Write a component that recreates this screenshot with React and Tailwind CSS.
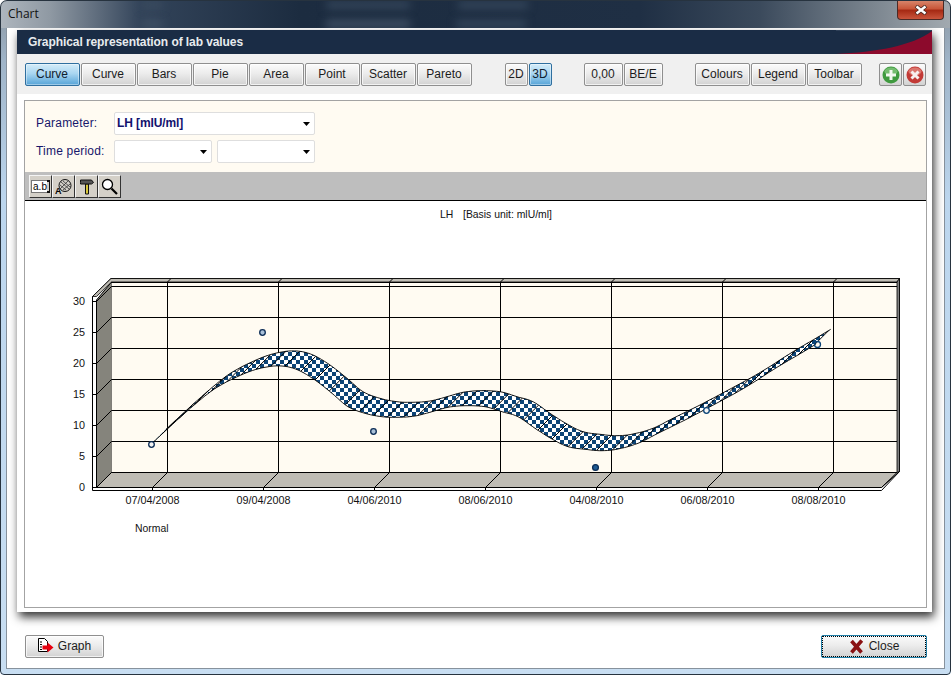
const CHART_BTNS = ["Curve", "Curve", "Bars", "Pie", "Area", "Point", "Scatter", "Pareto"];

const BTN = "h-[23px] flex items-center justify-center pb-[2px] pr-[1px] text-[12px] text-[#1c1c1c] rounded-[2px] border border-[#8f8f8f] bg-[linear-gradient(180deg,#fbfbfb_0%,#ececec_45%,#d2d2d2_100%)] shadow-[inset_0_0_0_1px_rgba(255,255,255,0.7)]";
const BTN_ON = "h-[23px] flex items-center justify-center pb-[2px] pr-[1px] text-[12px] text-[#10202e] rounded-[2px] border border-[#2f6f9f] bg-[linear-gradient(180deg,#d4ecf9_0%,#a9d6f1_45%,#56a4d8_100%)] shadow-[inset_0_0_0_1px_rgba(255,255,255,0.4)]";
const TOOL = "w-[23px] h-[23px] flex items-center justify-center bg-[#d4d0c8] border border-[#f4f4f4] border-r-[#333333] border-b-[#333333]";
const SELECT = "h-[23px] flex items-center justify-between bg-white border border-[#dedede] rounded-[2px] pl-[2px] pr-[3px]";

// back edge of the ribbon, the front edge is the same line moved by the 3D depth
const BACK = [
  [166, 429.3], [190, 407], [213, 386.7], [233, 371.7], [260, 358.3], [280, 352.3], [297, 351], [313, 355],
  [330, 365], [347, 378.3], [363, 391.7], [380, 398.3], [397, 401.7], [413, 402.3], [430, 401], [447, 396.7],
  [463, 392.3], [480, 390.7], [500, 391.7], [517, 396.7], [533, 401.7], [550, 413.3], [567, 424], [583, 431.7],
  [600, 434.3], [617, 435.7], [633, 434], [653, 428.3], [673, 418.3], [700, 405], [727, 390.7], [750, 378.3],
  [767, 368.3], [793, 351.7], [813, 340], [830.7, 329.3],
];
const DEPTH = 15;

const sampleCurve = (pts) => {
  const out = [];
  for (let i = 0; i < pts.length - 1; i++) {
    const p0 = pts[Math.max(i - 1, 0)];
    const p1 = pts[i];
    const p2 = pts[i + 1];
    const p3 = pts[Math.min(i + 2, pts.length - 1)];
    for (let s = 0; s < 6; s++) {
      const t = s / 6;
      const f = (a, b, c, d) =>
        0.5 * (2 * b + (c - a) * t + (2 * a - 5 * b + 4 * c - d) * t * t + (3 * b - a - 3 * c + d) * t * t * t);
      out.push([f(p0[0], p1[0], p2[0], p3[0]), f(p0[1], p1[1], p2[1], p3[1])]);
    }
  }
  out.push(pts[pts.length - 1]);
  return out;
};

const back = sampleCurve(BACK);
const front = back.map(([x, y]) => [x - DEPTH, y + DEPTH]);
const toPath = (pts) => pts.map(([x, y], i) => `${i ? "L" : "M"}${x.toFixed(1)} ${y.toFixed(1)}`).join(" ");
const ribbon = `${toPath(back)} ${[...front].reverse().map(([x, y]) => `L${x.toFixed(1)} ${y.toFixed(1)}`).join(" ")} Z`;

const slants = [];
let lastX = 160;
back.forEach(([x, y]) => {
  if (x - lastX >= 13.5) {
    slants.push([x, y]);
    lastX = x;
  }
});

const GRID_Y = [286, 317, 348, 379, 410, 441, 472];
const GRID_X = [167.5, 278.5, 389.5, 500.5, 611.5, 722.5, 833.5];
const Y_LABELS = ["30", "25", "20", "15", "10", "5", "0"];
const X_LABELS = ["07/04/2008", "09/04/2008", "04/06/2010", "08/06/2010", "04/08/2010", "06/08/2010", "08/08/2010"];

const LabChart = () => (
  <svg viewBox="25 201 901 406" width="901" height="406" className="block">
    <defs>
      <pattern id="checker" width="8" height="8" patternUnits="userSpaceOnUse">
        <rect width="8" height="8" fill="#ffffff" />
        <rect width="4" height="4" fill="#0c4476" />
        <rect x="4" y="4" width="4" height="4" fill="#0c4476" />
      </pattern>
    </defs>

    <text x="440" y="218" fontSize="10.4" fill="#111111">LH</text>
    <text x="463" y="218" fontSize="10.4" fill="#111111">[Basis unit: mlU/ml]</text>

    {/* box: left wall, top, back, right, floor */}
    <polygon points="92.5,296.5 111,278.5 899.5,278.5 899.5,471.5 881.5,490.5 92.5,490.5" fill="#ffffff" stroke="#000000" />
    <polygon points="96.5,300 111.5,282 111.5,472.5 96.5,487.5" fill="#85847c" stroke="#000000" />
    <polygon points="92.5,296.5 111,278.5 899.5,278.5 897,282 111.5,282 96.5,296.5" fill="#c0bdb5" stroke="#000000" strokeWidth="0.8" />
    <rect x="111.5" y="282.5" width="785.5" height="190" fill="#fffbf2" />
    <polygon points="897,282 899.5,278.5 899.5,471.5 897,472.5" fill="#808080" stroke="#000000" strokeWidth="0.8" />
    <polygon points="111.5,472.5 897,472.5 881.5,487.5 96.5,487.5" fill="#bfbcb4" stroke="#000000" />
    <line x1="111" y1="282.5" x2="897" y2="282.5" stroke="#000000" />
    <line x1="881.5" y1="487.5" x2="899.5" y2="471.5" stroke="#000000" />

    {GRID_Y.map((y) => (
      <g key={y}>
        <line x1="111.5" y1={y + 0.5} x2="897" y2={y + 0.5} stroke="#000000" />
        <line x1="111.5" y1={y + 0.5} x2="96.5" y2={y + 15.5} stroke="#000000" />
        <line x1="92.5" y1={y + 15.5} x2="96.5" y2={y + 15.5} stroke="#000000" />
      </g>
    ))}
    {GRID_X.map((x) => (
      <g key={x}>
        <line x1={x} y1="282" x2={x} y2="472.5" stroke="#000000" />
        <line x1={x} y1="282" x2={x + 3} y2="279" stroke="#000000" />
        <line x1={x} y1="472.5" x2={x - 15} y2="487.5" stroke="#000000" />
        <line x1={x - 15} y1="487.5" x2={x - 15} y2="491" stroke="#000000" />
      </g>
    ))}

    {Y_LABELS.map((t, i) => (
      <text key={t} x="85" y={305 + i * 31} fontSize="10.8" textAnchor="end" fill="#111111">{t}</text>
    ))}
    {X_LABELS.map((t, i) => (
      <text key={t} x={152.5 + i * 111} y="504" fontSize="10.8" textAnchor="middle" fill="#111111">{t}</text>
    ))}
    <text x="135" y="532" fontSize="10.4" fill="#111111">Normal</text>

    <circle cx="484" cy="393.5" r="3" fill="#ffffff" stroke="#0b2c55" />
    <path d={ribbon} fill="url(#checker)" />
    {slants.map(([x, y]) => (
      <line key={x} x1={x} y1={y} x2={x - DEPTH} y2={y + DEPTH} stroke="#000000" />
    ))}
    <path d={toPath(back)} fill="none" stroke="#000000" strokeWidth="0.9" />
    <path d={toPath(front)} fill="none" stroke="#000000" strokeWidth="0.9" />

    <circle cx="151.5" cy="444.5" r="2.8" fill="#f4f4f4" stroke="#0b2c55" strokeWidth="1.3" />
    <circle cx="262.5" cy="332.5" r="2.8" fill="#a9c0d8" stroke="#0b2c55" strokeWidth="1.3" />
    <circle cx="373.5" cy="431.5" r="2.8" fill="#a9c0d8" stroke="#0b2c55" strokeWidth="1.3" />
    <circle cx="595.5" cy="467.5" r="2.9" fill="#1f5a92" stroke="#0b2c55" strokeWidth="1.3" />
    <circle cx="706.5" cy="410.5" r="2.8" fill="#f4f4f4" stroke="#0b4478" strokeWidth="1.3" />
    <circle cx="817.5" cy="344.5" r="3" fill="none" stroke="#0b4478" strokeWidth="1.3" />
  </svg>
);

const Arrow = () => (
  <svg width="7" height="4" viewBox="0 0 7 4" className="mr-[1px]">
    <polygon points="0,0 7,0 3.5,4" fill="#000000" />
  </svg>
);

const FontIcon = () => (
  <svg width="18" height="17" viewBox="0 0 18 17">
    <circle cx="10" cy="7.5" r="6" fill="none" stroke="#111111" />
    <path d="M6 4l8 7M5 7l6 5M8 3l7 6M13 3l-8 8M15 6l-7 6" stroke="#333333" strokeWidth="0.8" />
    <text x="0" y="16" fontSize="9" fontWeight="700" fill="#000000">A</text>
  </svg>
);

const HammerIcon = () => (
  <svg width="16" height="17" viewBox="0 0 16 17">
    <path d="M6.5 6h3v10h-3z" fill="#d9c83a" stroke="#111111" />
    <path d="M1.5 4.500V2h11l2 2.500-2 1.500H1.500z" fill="#555555" stroke="#111111" />
  </svg>
);

const LensIcon = () => (
  <svg width="17" height="17" viewBox="0 0 17 17">
    <circle cx="6.5" cy="6.5" r="5" fill="#ffffff" stroke="#000000" strokeWidth="1.3" />
    <path d="M10.5 10.5L16 16" stroke="#000000" strokeWidth="2.2" />
  </svg>
);

const PlusIcon = () => (
  <svg width="18" height="18" viewBox="0 0 18 18">
    <circle cx="9" cy="9" r="8.5" fill="#3f9a3f" />
    <ellipse cx="9" cy="5.5" rx="6.5" ry="4" fill="#8ccb84" opacity="0.7" />
    <path d="M7.500 4h3v3.500H14v3h-3.500V14h-3v-3.500H4v-3h3.500z" fill="#f2f8f0" />
  </svg>
);

const CrossIcon = () => (
  <svg width="18" height="18" viewBox="0 0 18 18">
    <circle cx="9" cy="9" r="8.5" fill="#c23a36" />
    <ellipse cx="9" cy="5.5" rx="6.5" ry="4" fill="#e58f85" opacity="0.7" />
    <path d="M5.500 5.500l7 7M12.500 5.500l-7 7" stroke="#f7eeee" strokeWidth="3" />
  </svg>
);

const GraphIcon = () => (
  <svg width="17" height="17" viewBox="0 0 17 17">
    <path d="M1.5 1.5h6l3 3v10h-9z" fill="#ffffff" stroke="#000000" />
    <path d="M3 5h2M3 7.5h2M3 10h2M3 12.5h2" stroke="#000000" />
    <path d="M5.5 8.5h5V5.5l6 5-6 5v-3h-5z" fill="#e8000f" />
  </svg>
);

const CloseIcon = () => (
  <svg width="15" height="15" viewBox="0 0 15 15">
    <path d="M2.500 2L12.500 13.500M12.800 1.500L2.500 13.500" stroke="#8a1012" strokeWidth="3.600" />
  </svg>
);

export default function App() {
  return (
    <div className="relative w-[951px] h-[675px] overflow-hidden rounded-t-[7px] rounded-b-[4px] flex flex-col bg-[linear-gradient(180deg,#8a949e_0px,#9fb4c8_60px,#bcd6ee_200px,#c8def2_100%)] [font-family:'Liberation_Sans',Arial,sans-serif]">
      {/* title bar */}
      <div className="relative h-[28px] shrink-0 flex items-center pl-[8px] overflow-hidden bg-[linear-gradient(90deg,#aeb6be_0px,#8f99a3_50px,#33445a_140px,#1c2c40_300px,#1f2f44_640px,#3b4a5c_760px,#8a939b_900px,#a2aab0_951px)]">
        <div className="absolute left-[142px] top-[1px] w-[20px] h-[8px] bg-[#3a4b5f] blur-[4px]" />
        <div className="absolute left-[142px] top-[20px] w-[20px] h-[8px] bg-[#3f5064] blur-[4px]" />
        <div className="absolute left-[326px] top-[1px] w-[84px] h-[8px] bg-[#34455a] blur-[4px]" />
        <div className="absolute left-[326px] top-[20px] w-[84px] h-[8px] bg-[#3f5064] blur-[4px]" />
        <div className="absolute left-[456px] top-[20px] w-[70px] h-[8px] bg-[#34455a] blur-[4px]" />
        <div className="absolute left-[458px] top-[1px] w-[70px] h-[8px] bg-[#34455a] blur-[4px]" />
        <span className="relative text-[12px] text-[#111111] [font-family:'Open_Sans',sans-serif]">Chart</span>
        <div className="absolute right-[7px] top-0 w-[47px] h-[20px] rounded-b-[4px] border border-t-0 border-[#4b2a26] flex items-center justify-center bg-[linear-gradient(180deg,#d98a70_0%,#c9573a_45%,#a62a14_55%,#c9553c_100%)]">
          <svg width="14" height="10" viewBox="0 0 14 10">
            <path d="M2 1l10 8M12 1L2 9" stroke="#4a2a24" strokeWidth="4" />
            <path d="M2.500 1.500l9 7M11.500 1.500l-9 7" stroke="#ffffff" strokeWidth="2.400" />
          </svg>
        </div>
      </div>

      {/* window body */}
      <div className="mx-[7px] h-[640px] shrink-0 flex flex-col bg-white pt-[2px] shadow-[0_0_0_1px_#87929d]">
        <div className="ml-[10px] mr-[12px] h-[582px] flex flex-col bg-white shadow-[2px_5px_9px_rgba(0,0,0,0.8)]">
          <div className="h-[24px] shrink-0 flex items-center justify-between pl-[11px] bg-[#1a2c45]">
            <span className="text-[12px] font-bold tracking-[-0.08px] text-[#e8ebee]">Graphical representation of lab values</span>
            <svg width="96" height="24" viewBox="0 0 96 24" className="shrink-0">
              <path d="M0 24C40 22 76 16 96 1V24Z" fill="#8c0a2c" />
              <path d="M0 0.500H96" stroke="#2f4058" />
            </svg>
          </div>

          <div className="h-[40px] shrink-0 flex pt-[9px] pl-[8px] bg-[#f0f0f0]">
            <div className="flex gap-[1px]">
              {CHART_BTNS.map((b, i) => (
                <button key={i} className={`w-[55px] ${i === 0 ? BTN_ON : BTN}`}>{b}</button>
              ))}
            </div>
            <div className="flex gap-[1px] ml-[33px]">
              <button className={`w-[23px] ${BTN}`}>2D</button>
              <button className={`w-[23px] ${BTN_ON}`}>3D</button>
            </div>
            <div className="flex gap-[1px] ml-[32px]">
              <button className={`w-[39px] ${BTN}`}>0,00</button>
              <button className={`w-[39px] ${BTN}`}>BE/E</button>
            </div>
            <div className="flex gap-[1px] ml-[32px]">
              <button className={`w-[55px] ${BTN}`}>Colours</button>
              <button className={`w-[55px] ${BTN}`}>Legend</button>
              <button className={`w-[55px] ${BTN}`}>Toolbar</button>
            </div>
            <div className="flex gap-[1px] ml-[17px]">
              <button className="w-[23px] h-[23px] flex items-center justify-center rounded-[2px] border border-[#8f8f8f] bg-[linear-gradient(180deg,#fbfbfb_0%,#ececec_45%,#d2d2d2_100%)]"><PlusIcon /></button>
              <button className="w-[23px] h-[23px] flex items-center justify-center rounded-[2px] border border-[#8f8f8f] bg-[linear-gradient(180deg,#fbfbfb_0%,#ececec_45%,#d2d2d2_100%)]"><CrossIcon /></button>
            </div>
          </div>

          <div className="mt-[6px] ml-[7px] mr-[5px] h-[508px] shrink-0 flex flex-col border border-[#a3a3a3]">
            <div className="h-[71px] shrink-0 flex flex-col gap-[5px] pt-[11px] pl-[11px] bg-[#fffbf2]">
              <div className="flex items-center">
                <span className="w-[78px] pb-[2px] text-[12px] tracking-[0.2px] text-[#17176b]">Parameter:</span>
                <div className={`w-[201px] ${SELECT}`}>
                  <span className="pb-[2px] text-[12px] font-bold tracking-[-0.1px] text-[#12126e]">LH [mIU/ml]</span>
                  <Arrow />
                </div>
              </div>
              <div className="flex items-center">
                <span className="w-[78px] pb-[2px] text-[12px] tracking-[0.2px] text-[#17176b]">Time period:</span>
                <div className={`w-[98px] ${SELECT}`}><span /><Arrow /></div>
                <div className={`w-[98px] ml-[5px] ${SELECT}`}><span /><Arrow /></div>
              </div>
            </div>

            <div className="h-[29px] shrink-0 flex items-start pt-[3px] pl-[4px] gap-0 bg-[#bebebe] border-b border-black">
              <div className={TOOL}>
                <span className="pl-[1px] bg-white border border-[#777777] border-r-0 text-[10px] leading-[11px] text-black">a.b</span>
                <span className="w-[3px] h-[13px] border border-[#111111] border-y-2 border-l-0 border-r-[1px]" />
              </div>
              <div className={TOOL}><FontIcon /></div>
              <div className={TOOL}><HammerIcon /></div>
              <div className={TOOL}><LensIcon /></div>
            </div>

            <div className="flex-1 bg-white">
              <LabChart />
            </div>
          </div>
        </div>

        <div className="mt-[23px] pl-[18px] pr-[17px] flex items-start justify-between">
          <button className={`w-[79px] gap-[4px] ${BTN}`}>
            <GraphIcon />
            <span>Graph</span>
          </button>
          <button className="w-[106px] gap-[5px] h-[23px] pb-[1px] flex items-center justify-center text-[12px] text-[#1c1c1c] rounded-[2px] border border-[#1f7fa8] bg-[linear-gradient(180deg,#fbfbfb_0%,#ececec_45%,#d2d2d2_100%)] outline-1 outline-dotted outline-black -outline-offset-2">
            <CloseIcon />
            <span className="pb-[1px]">Close</span>
          </button>
        </div>
      </div>

      {/* outer frame line, sits over the bars */}
      <div className="absolute inset-0 rounded-t-[7px] rounded-b-[4px] border border-[#27333f] pointer-events-none" />
    </div>
  );
}
